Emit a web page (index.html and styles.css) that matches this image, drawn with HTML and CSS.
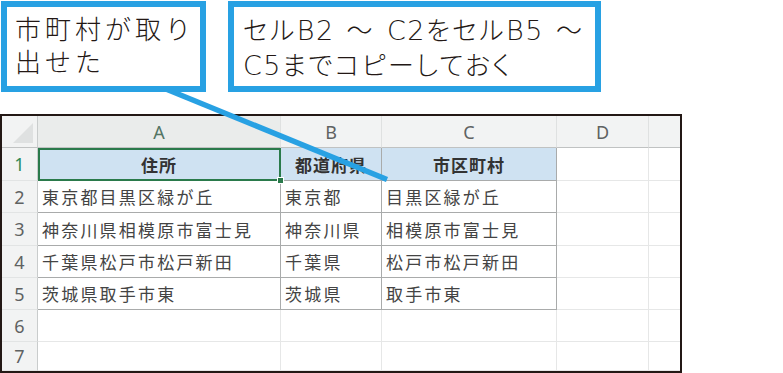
FILE: index.html
```html
<!DOCTYPE html>
<html lang="ja">
<head>
<meta charset="utf-8">
<title>市区町村の抽出</title>
<link rel="stylesheet" href="styles.css">
</head>
<body>
<div class="page">
  <div class="callouts">
    <div class="note note-a">市町村が取り<br>出せた</div>
    <div class="note note-b">セル<span class="en">B2</span> ～ <span class="en">C2</span>をセル<span class="en">B5</span> ～<br><span class="en">C5</span>までコピーしておく</div>
  </div>

  <svg class="leader" width="783" height="373" viewBox="0 0 783 373" aria-hidden="true">
    <line x1="150" y1="82.5" x2="387" y2="179.5" stroke="#28a1e3" stroke-width="5.5"/>
  </svg>

  <div class="sheet">
    <div class="corner"><span class="tri"></span></div>
    <div class="colhead sel">A</div>
    <div class="colhead">B</div>
    <div class="colhead">C</div>
    <div class="colhead">D</div>
    <div class="colhead last"></div>

    <div class="rowhead sel">1</div>
    <div class="cell head active">住所<span class="handle"></span></div>
    <div class="cell head">都道府県</div>
    <div class="cell head">市区町村</div>
    <div class="cell empty"></div>
    <div class="cell empty last"></div>

    <div class="rowhead">2</div>
    <div class="cell">東京都目黒区緑が丘</div>
    <div class="cell">東京都</div>
    <div class="cell">目黒区緑が丘</div>
    <div class="cell empty"></div>
    <div class="cell empty last"></div>

    <div class="rowhead">3</div>
    <div class="cell">神奈川県相模原市富士見</div>
    <div class="cell">神奈川県</div>
    <div class="cell">相模原市富士見</div>
    <div class="cell empty"></div>
    <div class="cell empty last"></div>

    <div class="rowhead">4</div>
    <div class="cell">千葉県松戸市松戸新田</div>
    <div class="cell">千葉県</div>
    <div class="cell">松戸市松戸新田</div>
    <div class="cell empty"></div>
    <div class="cell empty last"></div>

    <div class="rowhead">5</div>
    <div class="cell">茨城県取手市東</div>
    <div class="cell">茨城県</div>
    <div class="cell">取手市東</div>
    <div class="cell empty"></div>
    <div class="cell empty last"></div>

    <div class="rowhead">6</div>
    <div class="cell empty"></div>
    <div class="cell empty"></div>
    <div class="cell empty"></div>
    <div class="cell empty"></div>
    <div class="cell empty last"></div>

    <div class="rowhead">7</div>
    <div class="cell empty"></div>
    <div class="cell empty"></div>
    <div class="cell empty"></div>
    <div class="cell empty"></div>
    <div class="cell empty last"></div>
  </div>
</div>
</body>
</html>
```

FILE: styles.css
```css
* { box-sizing: border-box; }

html, body {
  margin: 0;
  padding: 0;
  background: #ffffff;
}

body {
  font-family: "Noto Sans CJK JP", "Noto Sans", sans-serif;
  color: #231815;
}

.page {
  position: relative;
  width: 783px;
  height: 373px;
  overflow: hidden;
}

/* speech notes at the top */
.callouts {
  position: relative;
  z-index: 2;
  display: flex;
  gap: 22px;
  padding: 1px 0 0 1px;
  height: 114px;
}

.note {
  height: 91px;
  border: 6px solid #28a1e3;
  background: #ffffff;
  font-size: 26px;
  font-weight: 300;
  line-height: 33px;
  letter-spacing: 4px;
  padding: 4px 0 0 8px;
  white-space: nowrap;
}

.note-a { width: 205px; }

.note-b {
  width: 373px;
  padding-left: 9px;
  padding-top: 5px;
  letter-spacing: 2.3px;
  word-spacing: 4px;
  font-feature-settings: "palt";
}

.note-b .en {
  font-family: "DejaVu Sans", "Noto Sans", sans-serif;
  font-size: 27px;
  letter-spacing: 1.5px;
}

.leader {
  position: absolute;
  left: 0;
  top: 0;
  z-index: 1;
}

/* worksheet */
.sheet {
  width: 682px;
  height: 259px;
  border: 2px solid #231815;
  display: grid;
  grid-template-columns: 36px 243px 101px 175px 92px 1fr;
  grid-template-rows: 32px 33px 32px 33px 32px 32px 32px 1fr;
  font-size: 17px;
}

.corner,
.colhead,
.rowhead {
  background: #f2f3f3;
  color: #5f6262;
  display: flex;
  align-items: center;
  justify-content: center;
  font-family: "Noto Sans", "Noto Sans CJK JP", sans-serif;
}

.corner {
  border-right: 1px solid #c9cccc;
  border-bottom: 1px solid #c0c2c2;
  position: relative;
}

.tri {
  position: absolute;
  right: 4px;
  bottom: 4px;
  width: 0;
  height: 0;
  border-left: 20px solid transparent;
  border-bottom: 20px solid #dfe1e1;
}

.colhead {
  border-right: 1px solid #dfe1e1;
  border-bottom: 1px solid #c0c2c2;
  font-size: 18px;
}

.colhead.sel { color: #537564; background: #eaeceb; }
.colhead.last { border-right: none; }

.rowhead {
  border-right: 1px solid #c9cccc;
  border-bottom: 1px solid #e2e4e4;
  font-size: 18px;
}

.rowhead.sel { color: #2f8a57; }

.cell {
  border-right: 1px solid #a9abab;
  border-bottom: 1px solid #a9abab;
  display: flex;
  align-items: center;
  padding-left: 4px;
  color: #444444;
  letter-spacing: 2.2px;
  white-space: nowrap;
  overflow: visible;
}

.cell.head {
  background: #cfe2f2;
  font-weight: 700;
  justify-content: center;
  padding-left: 0;
  color: #333333;
  letter-spacing: 1px;
}

.cell.active {
  position: relative;
  outline: 2px solid #2a7a4b;
  outline-offset: -2px;
}

.handle {
  position: absolute;
  right: -4px;
  bottom: -4px;
  width: 7px;
  height: 7px;
  background: #2a7a4b;
  border: 1px solid #ffffff;
}

.cell.empty {
  border-right: 1px solid #e6e7e7;
  border-bottom: 1px solid #e6e7e7;
}

.cell.last { border-right: none; }
```
